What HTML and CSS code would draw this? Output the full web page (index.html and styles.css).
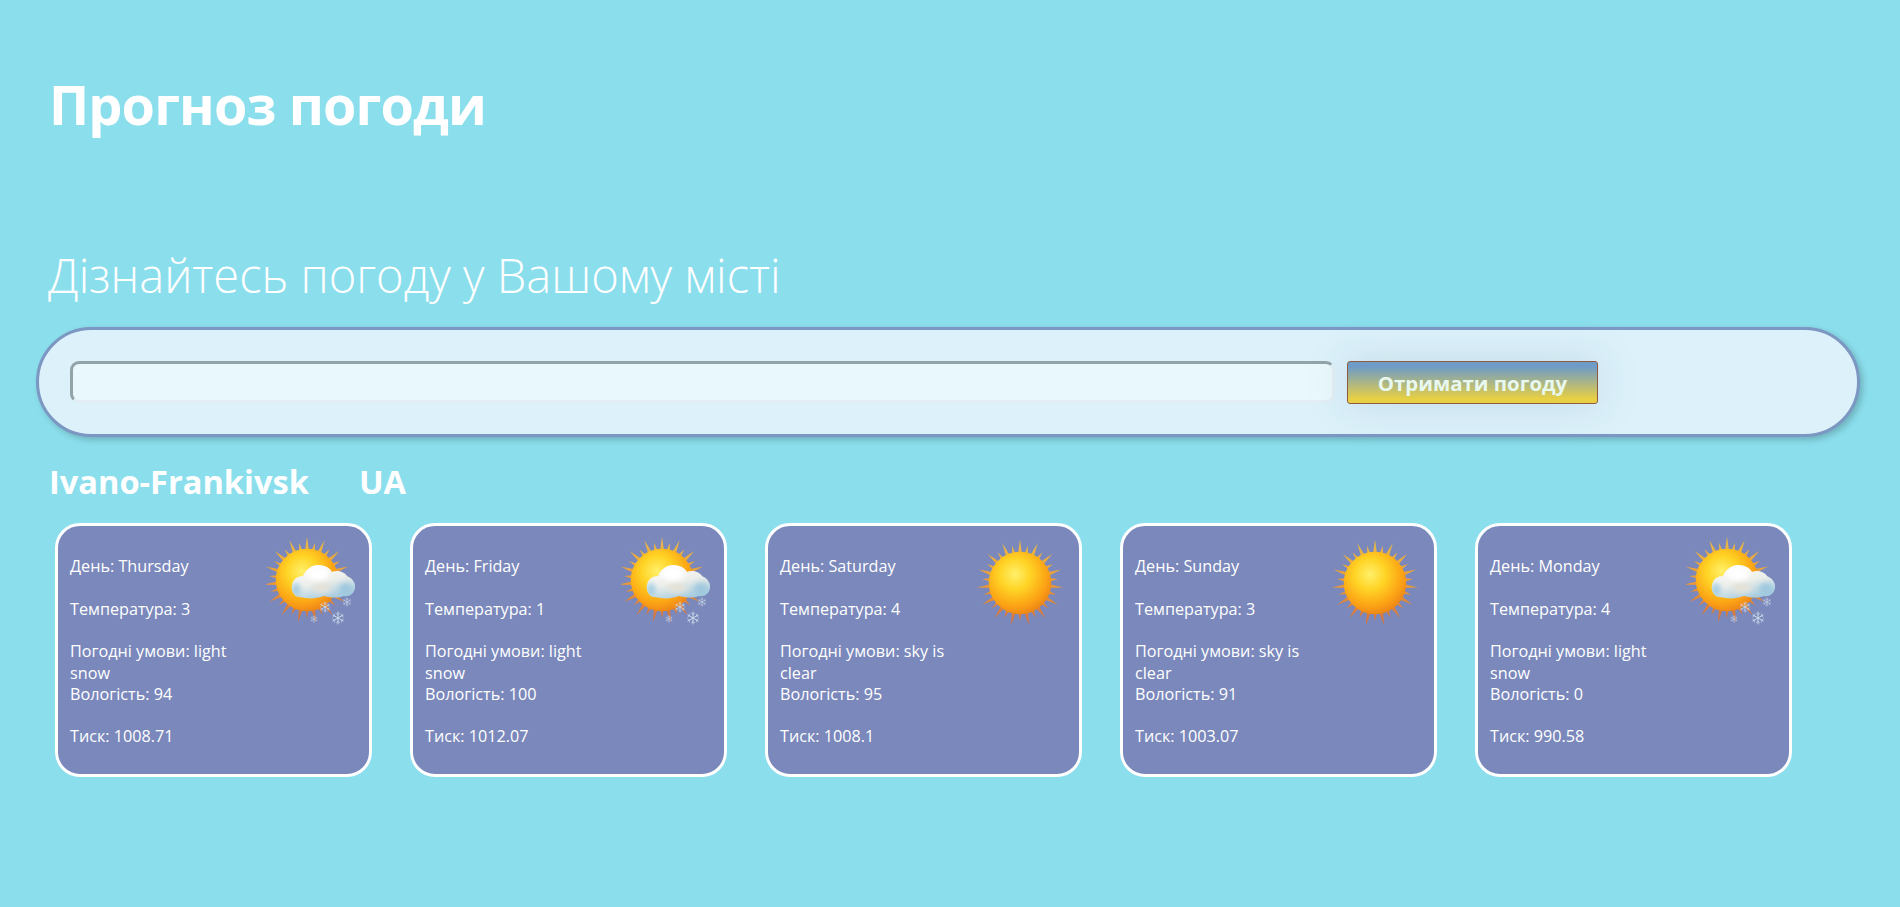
FILE: index.html
```html
<!DOCTYPE html>
<html lang="uk">
<head>
  <meta charset="UTF-8">
  <meta name="viewport" content="width=device-width, initial-scale=1.0">
  <title>Прогноз погоди</title>
  <link rel="stylesheet" href="styles.css">
</head>
<body>
  <svg class="defs" width="0" height="0" aria-hidden="true">
    <defs>
      <radialGradient id="disc" cx="0.42" cy="0.36" r="0.7">
        <stop offset="0" stop-color="#fff06a"/>
        <stop offset="0.35" stop-color="#ffd426"/>
        <stop offset="0.75" stop-color="#fba013"/>
        <stop offset="1" stop-color="#e87c14"/>
      </radialGradient>
      <linearGradient id="rayfill" x1="0" y1="0" x2="0" y2="1">
        <stop offset="0" stop-color="#e8bd48"/>
        <stop offset="0.5" stop-color="#e89a3a"/>
        <stop offset="1" stop-color="#d06c40"/>
      </linearGradient>
      <linearGradient id="cloudfill" x1="0.15" y1="0" x2="0.6" y2="1">
        <stop offset="0" stop-color="#ffffff"/>
        <stop offset="0.55" stop-color="#eceeea"/>
        <stop offset="1" stop-color="#a3cbe0"/>
      </linearGradient>
      <filter id="soft" x="-20%" y="-20%" width="140%" height="140%">
        <feGaussianBlur stdDeviation="0.35"/>
      </filter>
      <filter id="softer" x="-50%" y="-50%" width="200%" height="200%">
        <feGaussianBlur stdDeviation="2.5"/>
      </filter>
      <clipPath id="cloudclip">
        <path d="M34 63C27 63 25 55 26 51C27 45 32 42 37 42C40 35 46 31 52 31C59 31 64 34 66 38C70 36 78 37 81 42C86 44 90 49 89 54C88 60 83 63 78 62C70 65 62 63 58 62C50 65 42 65 34 63Z"/>
      </clipPath>
      <path id="ray" d="M-2 -27 L0 -41 L2 -27 Z"/>
      <path id="rayshort" d="M-1.8 -27 L0 -36 L1.8 -27 Z"/>
      <mask id="raymask" maskUnits="userSpaceOnUse" x="-45" y="-45" width="90" height="90">
        <g fill="#fff">
          <use href="#ray"/>
          <use href="#rayshort" transform="rotate(12)"/>
          <use href="#ray" transform="rotate(24)"/>
          <use href="#rayshort" transform="rotate(36)"/>
          <use href="#ray" transform="rotate(48)"/>
          <use href="#rayshort" transform="rotate(60)"/>
          <use href="#ray" transform="rotate(72)"/>
          <use href="#rayshort" transform="rotate(84)"/>
          <use href="#ray" transform="rotate(96)"/>
          <use href="#rayshort" transform="rotate(108)"/>
          <use href="#ray" transform="rotate(120)"/>
          <use href="#rayshort" transform="rotate(132)"/>
          <use href="#ray" transform="rotate(144)"/>
          <use href="#rayshort" transform="rotate(156)"/>
          <use href="#ray" transform="rotate(168)"/>
          <use href="#rayshort" transform="rotate(180)"/>
          <use href="#ray" transform="rotate(192)"/>
          <use href="#rayshort" transform="rotate(204)"/>
          <use href="#ray" transform="rotate(216)"/>
          <use href="#rayshort" transform="rotate(228)"/>
          <use href="#ray" transform="rotate(240)"/>
          <use href="#rayshort" transform="rotate(252)"/>
          <use href="#ray" transform="rotate(264)"/>
          <use href="#rayshort" transform="rotate(276)"/>
          <use href="#ray" transform="rotate(288)"/>
          <use href="#rayshort" transform="rotate(300)"/>
          <use href="#ray" transform="rotate(312)"/>
          <use href="#rayshort" transform="rotate(324)"/>
          <use href="#ray" transform="rotate(336)"/>
          <use href="#rayshort" transform="rotate(348)"/>
        </g>
      </mask>
      <g id="sun">
        <rect x="-45" y="-45" width="90" height="90" fill="url(#rayfill)" mask="url(#raymask)" filter="url(#soft)"/>
        <circle r="29.5" fill="url(#disc)" filter="url(#soft)"/>
      </g>
      <g id="flake" fill="none" stroke="#cfdcec" stroke-width=".8" stroke-linecap="round">
        <path d="M0 -5V5M-4.3 -2.5L4.3 2.5M-4.3 2.5L4.3 -2.5"/>
        <path d="M-1.5 -4L0 -2.8L1.5 -4M-1.5 4L0 2.8L1.5 4M-4.4 -.8L-3 -1.7L-2.8 -3.4M4.4 .8L3 1.7L2.8 3.4M-4.4 .8L-3 1.7L-2.8 3.4M4.4 -.8L3 -1.7L2.8 -3.4" stroke-width=".5"/>
      </g>
      <symbol id="icon-clear" viewBox="0 0 100 100">
        <use href="#sun" transform="translate(44 49) scale(1.06)"/>
      </symbol>
      <symbol id="icon-snow" viewBox="0 0 100 100">
        <use href="#sun" transform="translate(41 46) scale(1.06)"/>
        <path fill="url(#cloudfill)" d="M34 63C27 63 25 55 26 51C27 45 32 42 37 42C40 35 46 31 52 31C59 31 64 34 66 38C70 36 78 37 81 42C86 44 90 49 89 54C88 60 83 63 78 62C70 65 62 63 58 62C50 65 42 65 34 63Z"/>
        <g clip-path="url(#cloudclip)">
          <g filter="url(#softer)">
            <ellipse cx="30" cy="56" rx="5" ry="7" fill="#a9d0e2"/>
            <ellipse cx="52" cy="40" rx="11" ry="7" fill="#ffffff"/>
            <ellipse cx="56" cy="54" rx="10" ry="5" fill="#e4e2d8"/>
            <ellipse cx="80" cy="55" rx="7" ry="6" fill="#9fc8de"/>
          </g>
        </g>
        <use href="#flake" transform="translate(59 73)"/>
        <use href="#flake" transform="translate(81 68) scale(.8)"/>
        <use href="#flake" transform="translate(72 84) scale(1.2)"/>
        <use href="#flake" transform="translate(48 85) scale(.65)"/>
      </symbol>
    </defs>
  </svg>

  <h1>Прогноз погоди</h1>
  <h2>Дізнайтесь погоду у Вашому місті</h2>

  <form class="search">
    <input class="search-input" type="text">
    <button class="search-btn" type="button">Отримати погоду</button>
  </form>

  <div class="city"><span>Ivano-Frankivsk</span><span>UA</span></div>

  <div class="cards">
    <div class="card">
      <div class="info">
        <p>День: Thursday</p>
        <p class="temp">Температура: 3</p>
        <p class="cond">Погодні умови: light snow</p>
        <p class="hum">Вологість: 94</p>
        <p>Тиск: 1008.71</p>
      </div>
      <svg class="icon"><use href="#icon-snow"/></svg>
    </div>
    <div class="card">
      <div class="info">
        <p>День: Friday</p>
        <p class="temp">Температура: 1</p>
        <p class="cond">Погодні умови: light snow</p>
        <p class="hum">Вологість: 100</p>
        <p>Тиск: 1012.07</p>
      </div>
      <svg class="icon"><use href="#icon-snow"/></svg>
    </div>
    <div class="card">
      <div class="info">
        <p>День: Saturday</p>
        <p class="temp">Температура: 4</p>
        <p class="cond">Погодні умови: sky is clear</p>
        <p class="hum">Вологість: 95</p>
        <p>Тиск: 1008.1</p>
      </div>
      <svg class="icon"><use href="#icon-clear"/></svg>
    </div>
    <div class="card">
      <div class="info">
        <p>День: Sunday</p>
        <p class="temp">Температура: 3</p>
        <p class="cond">Погодні умови: sky is clear</p>
        <p class="hum">Вологість: 91</p>
        <p>Тиск: 1003.07</p>
      </div>
      <svg class="icon"><use href="#icon-clear"/></svg>
    </div>
    <div class="card">
      <div class="info">
        <p>День: Monday</p>
        <p class="temp">Температура: 4</p>
        <p class="cond">Погодні умови: light snow</p>
        <p class="hum">Вологість: 0</p>
        <p>Тиск: 990.58</p>
      </div>
      <svg class="icon"><use href="#icon-snow"/></svg>
    </div>
  </div>
</body>
</html>
```

FILE: styles.css
```css
body {
  margin: 0;
  padding: 0 40px 0 36px;
  background-color: #8bdeec;
  color: #fff;
  font-family: "Open Sans", "Noto Sans", sans-serif;
}
.defs {
  position: absolute;
}
h1 {
  margin: 69px 0 0 13px;
  font-size: 54px;
  line-height: 70px;
  font-weight: 700;
  letter-spacing: -0.9px;
}
h2 {
  margin: 105px 0 0 12px;
  font-size: 47px;
  line-height: 62px;
  font-weight: 300;
}
.search {
  display: flex;
  align-items: flex-start;
  gap: 12px;
  box-sizing: border-box;
  width: 1824px;
  height: 110px;
  margin-top: 21px;
  padding: 31px 31px 0;
  background-color: #dcf1fa;
  border: 3px solid #7b97c2;
  border-radius: 55px;
  box-shadow: 3px 3px 6px rgba(0,0,0,0.2);
}
.search-input {
  box-sizing: border-box;
  width: 1265px;
  height: 42px;
  background-color: #e9f8fc;
  border: 3px solid;
  border-color: #93a4a8 #e2eef3 #e2eef3 #93a4a8;
  border-radius: 9px;
}
.search-btn {
  box-sizing: border-box;
  width: 251px;
  height: 43px;
  background: linear-gradient(#6f9cc6 12%, #e8d044 90%);
  border: 1px solid #8f5a40;
  border-radius: 3px;
  box-shadow: 0 0 40px rgba(110,140,160,0.22);
  color: #e9f8ee;
  font-family: "Open Sans", sans-serif;
  font-size: 20.4px;
  font-weight: 700;
}
.city {
  display: flex;
  gap: 50px;
  margin: 23px 0 0 13px;
  font-size: 32.6px;
  line-height: 44px;
  font-weight: 700;
}
.cards {
  display: flex;
  gap: 38px;
  margin: 19px 0 0 19px;
}
.card {
  display: flex;
  justify-content: space-between;
  box-sizing: border-box;
  width: 317px;
  height: 254px;
  padding: 8px 3px 0 12px;
  background-color: #7a88bb;
  border: 3px solid #fff;
  border-radius: 25px;
}
.info {
  width: 175px;
  padding-top: 22px;
  font-size: 16.2px;
  line-height: 21px;
}
.info p {
  margin: 0 0 22px;
}
.info .temp {
  margin-bottom: 21px;
}
.info .cond {
  margin-bottom: 0;
  line-height: 21.5px;
}
.info .hum {
  margin-bottom: 21px;
}
.icon {
  width: 100px;
  height: 100px;
  flex-shrink: 0;
}
```
